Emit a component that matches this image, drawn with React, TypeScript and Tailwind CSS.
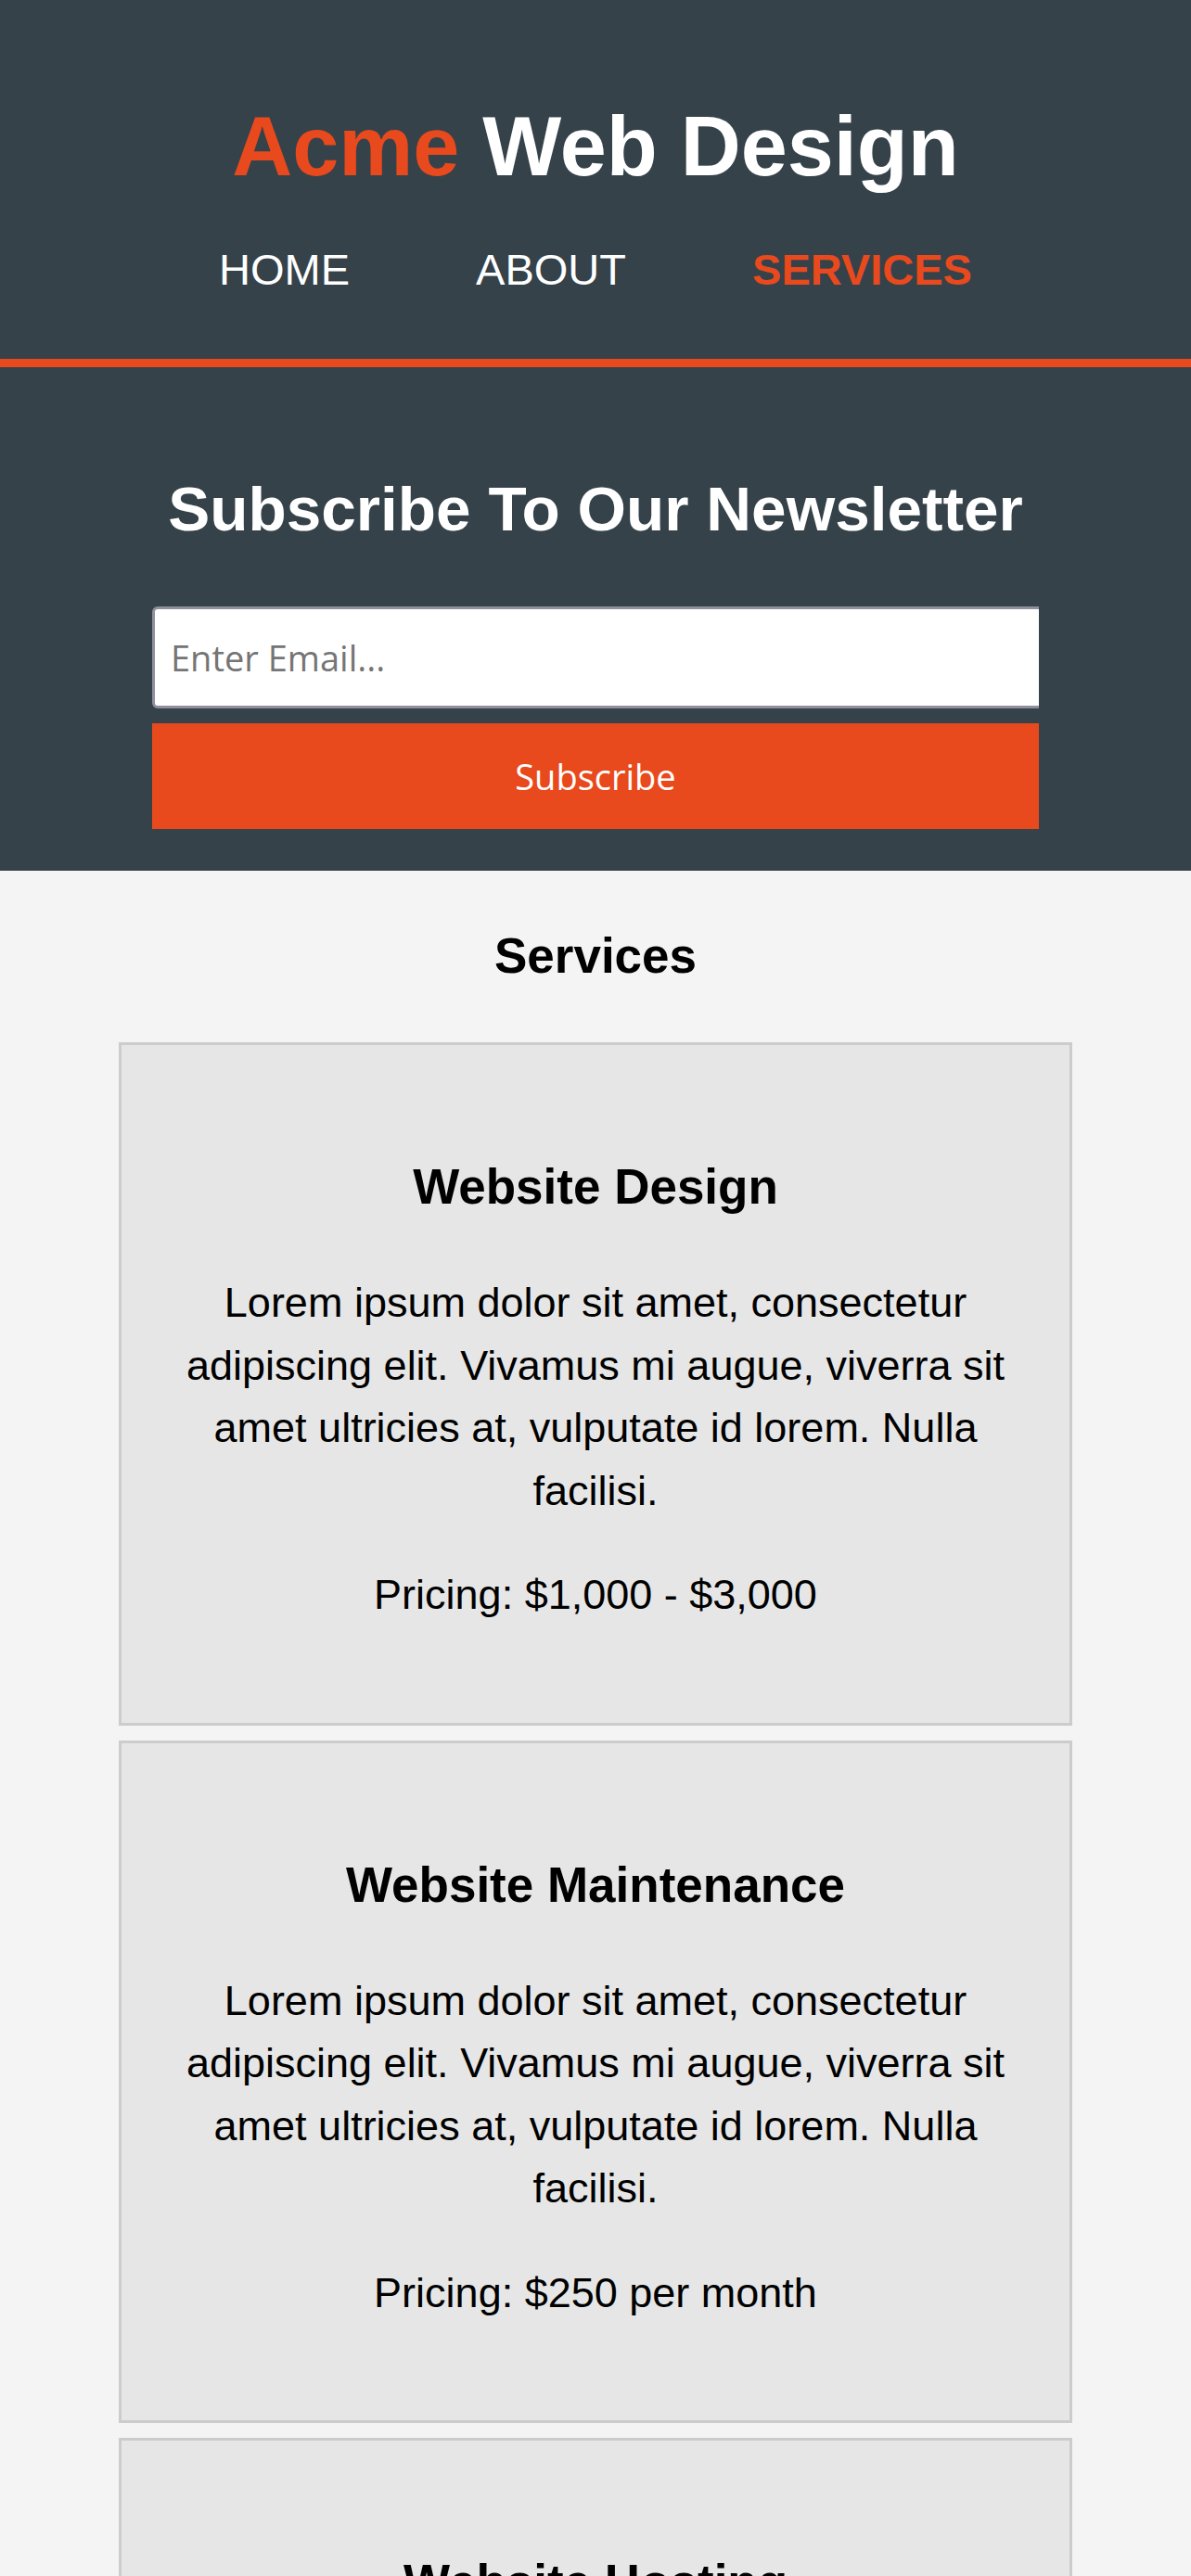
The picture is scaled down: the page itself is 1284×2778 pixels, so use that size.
import React from "react";

const services = [
  { title: "Website Design", price: "Pricing: $1,000 - $3,000" },
  { title: "Website Maintenance", price: "Pricing: $250 per month" },
  { title: "Website Hosting", price: "Pricing: $25 per month" },
];

const lorem =
  "Lorem ipsum dolor sit amet, consectetur adipiscing elit. Vivamus mi augue, viverra sit amet ultricies at, vulputate id lorem. Nulla facilisi.";

export default function App() {
  return (
    <div className="min-h-screen bg-[#f4f4f4] font-['Liberation_Sans',Arial,sans-serif] text-black">
      {/* ═══════════ HEADER ═══════════ */}
      <header className="bg-[#35424a] pt-[113px] pb-[73px] border-b-[9px] border-[#e8491d] text-white">
        <h1 className="text-center text-[90px] leading-[90px] font-bold">
          <span className="text-[#e8491d]">Acme</span> Web Design
        </h1>
        <nav className="mt-[65px] flex justify-center gap-[136px] text-[47px] leading-[46px] uppercase">
          <a className="text-white">Home</a>
          <a className="text-white">About</a>
          <a className="text-[#e8491d] font-bold">Services</a>
        </nav>
      </header>

      {/* ═══════════ NEWSLETTER ═══════════ */}
      <section className="bg-[#35424a] pt-[119px] pb-[45px] text-white">
        <h2 className="text-center text-[67.5px] leading-[67px] font-bold">Subscribe To Our Newsletter</h2>
        <form className="mx-auto mt-[72px] w-[956px] flex flex-col gap-[16px]" onSubmit={(e) => e.preventDefault()}>
          <div className="w-full overflow-hidden">
            <input
              type="email"
              placeholder="Enter Email..."
              className="block w-[1000px] h-[110px] bg-white border-[3px] border-[#8f8f9d] rounded-[6px] pl-[17px] font-['Open_Sans',sans-serif] text-[38px] text-black placeholder:text-[#757575] outline-none"
            />
          </div>
          <button
            type="submit"
            className="w-full h-[114px] bg-[#e8491d] text-white font-['Open_Sans',sans-serif] text-[38px]"
          >
            Subscribe
          </button>
        </form>
      </section>

      {/* ═══════════ SERVICES ═══════════ */}
      <section className="pt-[65px] pb-[60px]">
        <h1 className="text-center text-[53px] leading-[53px] font-bold">Services</h1>
        <div className="mt-[67px] mx-[128px] flex flex-col gap-[16px]">
          {services.map((s) => (
            <div
              key={s.title}
              className="border-[3px] border-[#cccccc] bg-[#e6e6e6] px-[60px] pt-[126px] pb-[104px] text-center"
            >
              <h3 className="text-[53px] leading-[53px] font-bold">{s.title}</h3>
              <p className="mt-[65px] text-[45px] leading-[67.5px]">{lorem}</p>
              <p className="mt-[45px] text-[45px] leading-[67.5px]">{s.price}</p>
            </div>
          ))}
        </div>
      </section>
    </div>
  );
}
